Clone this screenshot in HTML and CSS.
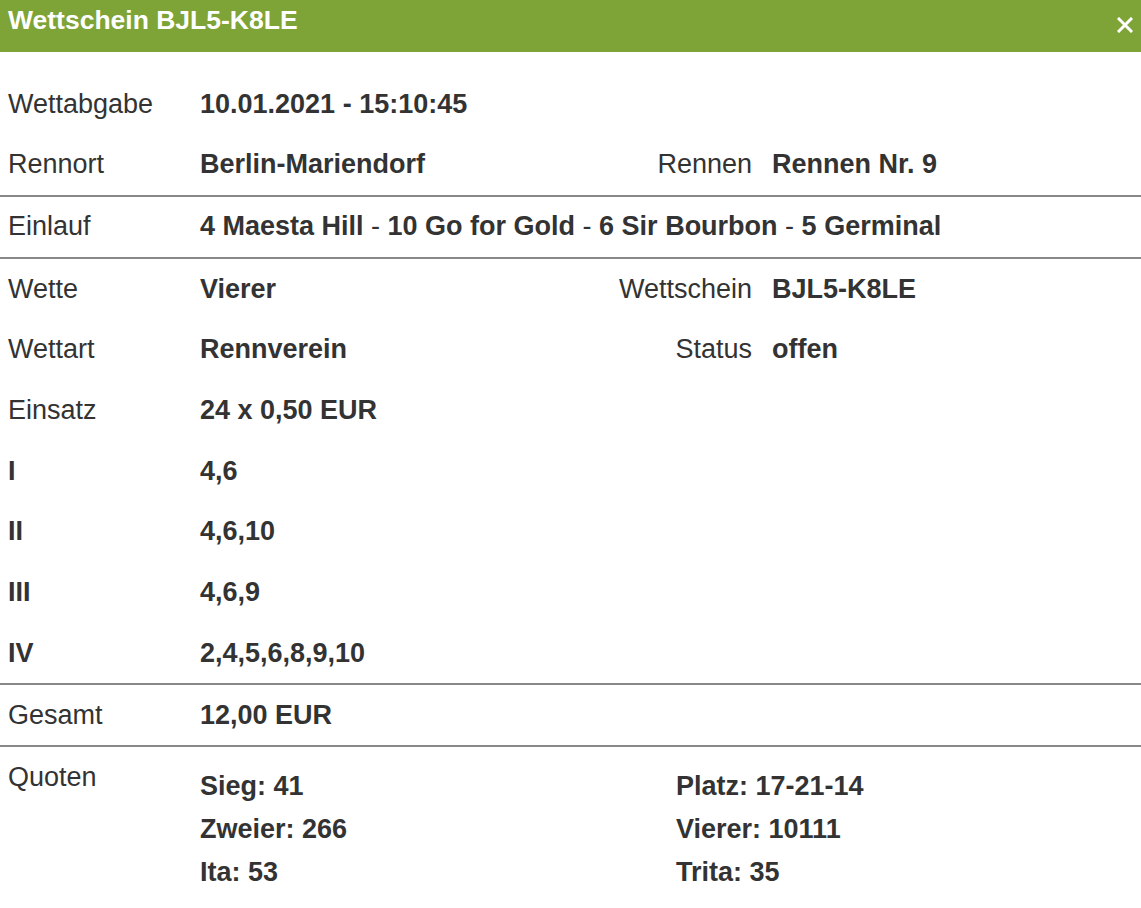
FILE: index.html
```html
<!DOCTYPE html>
<html lang="de">
<head>
  <meta charset="UTF-8">
  <meta name="viewport" content="width=device-width, initial-scale=1.0">
  <title>Wettschein BJL5-K8LE</title>
  <link rel="stylesheet" href="styles.css">
</head>
<body>

  <div class="modal-header">
    <h1>Wettschein BJL5-K8LE</h1>
    <span class="close-btn">
      <svg width="16" height="16" viewBox="0 0 16 16"><path d="M2 2 L14 14 M14 2 L2 14" stroke="#fff" stroke-width="3" stroke-linecap="square"/></svg>
    </span>
  </div>

  <div class="ticket">
    <div class="row">
      <span class="label">Wettabgabe</span>
      <span class="value">10.01.2021 - 15:10:45</span>
    </div>
    <div class="row line-below">
      <span class="label">Rennort</span>
      <span class="value">Berlin-Mariendorf</span>
      <span class="label right">Rennen</span>
      <span class="value">Rennen Nr. 9</span>
    </div>
    <div class="row line-below">
      <span class="label">Einlauf</span>
      <span class="value wide">4 Maesta Hill <span class="sep">-</span> 10 Go for Gold <span class="sep">-</span> 6 Sir Bourbon <span class="sep">-</span> 5 Germinal</span>
    </div>
    <div class="row">
      <span class="label">Wette</span>
      <span class="value">Vierer</span>
      <span class="label right">Wettschein</span>
      <span class="value">BJL5-K8LE</span>
    </div>
    <div class="row">
      <span class="label">Wettart</span>
      <span class="value">Rennverein</span>
      <span class="label right">Status</span>
      <span class="value">offen</span>
    </div>
    <div class="row">
      <span class="label">Einsatz</span>
      <span class="value">24 x 0,50 EUR</span>
    </div>
    <div class="row">
      <span class="label bold">I</span>
      <span class="value">4,6</span>
    </div>
    <div class="row">
      <span class="label bold">II</span>
      <span class="value">4,6,10</span>
    </div>
    <div class="row">
      <span class="label bold">III</span>
      <span class="value">4,6,9</span>
    </div>
    <div class="row line-below">
      <span class="label bold">IV</span>
      <span class="value">2,4,5,6,8,9,10</span>
    </div>
    <div class="row line-below">
      <span class="label">Gesamt</span>
      <span class="value">12,00 EUR</span>
    </div>
    <div class="quotes">
      <span class="label">Quoten</span>
      <div class="quote-list">
        <span>Sieg: 41</span>
        <span>Platz: 17-21-14</span>
        <span>Zweier: 266</span>
        <span>Vierer: 10111</span>
        <span>Ita: 53</span>
        <span>Trita: 35</span>
      </div>
    </div>
  </div>

</body>
</html>
```

FILE: styles.css
```css
/* Reset */
* {
  margin: 0;
  padding: 0;
  box-sizing: border-box;
}

body {
  font-family: "Liberation Sans", Arial, sans-serif;
  font-size: 27px;
  color: #333;
  background: #fff;
}

/* Header bar */
.modal-header {
  display: flex;
  align-items: flex-start;
  justify-content: space-between;
  height: 52px;
  padding: 7px 8px 0 8px;
  background: #7ea437;
  color: #fff;
}

.modal-header h1 {
  font-size: 26.5px;
  font-weight: bold;
  line-height: 27px;
}

.close-btn {
  display: flex;
  margin-top: 10px;
  cursor: pointer;
}

/* Ticket table */
.ticket {
  padding-top: 22px;
}

.row {
  display: grid;
  grid-template-columns: 200px 380px 192px 1fr;
  align-items: center;
  height: 60.7px;
}

.row.line-below {
  border-bottom: 2px solid #888;
  height: 62.1px;
}

.label {
  padding-left: 8px;
  white-space: nowrap;
}

.label.right {
  text-align: right;
  padding-right: 20px;
}

.label.bold,
.value {
  font-weight: bold;
  white-space: nowrap;
}

.value.wide {
  grid-column: 2 / 5;
}

.sep {
  font-weight: normal;
}

/* Quotes block */
.quotes {
  display: grid;
  grid-template-columns: 200px 1fr;
  padding-top: 9px;
}

.quotes .label {
  line-height: 43px;
}

.quote-list {
  display: grid;
  grid-template-columns: 476px 1fr;
  padding-top: 9px;
  font-weight: bold;
  line-height: 43px;
}
```
